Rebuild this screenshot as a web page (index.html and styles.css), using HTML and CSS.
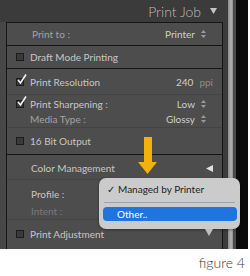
FILE: index.html
```html
<!DOCTYPE html>
<html lang="en">
<head>
  <meta charset="UTF-8">
  <title>Print Job - figure 4</title>
  <link rel="stylesheet" href="styles.css">
</head>
<body>
  <div class="shot">
    <div class="main">
      <div class="head">
        <span class="head-title">Print Job</span>
        <svg class="head-tri" width="7" height="6" viewBox="0 0 7 6"><polygon points="0,0 7,0 3.5,6" fill="#c4c4c4"/></svg>
      </div>
      <div class="body">
        <div class="strip"></div>
        <div class="panel">
          <div class="sec">
            <div class="row row-to">
              <span class="label dim">Print to :</span>
              <span class="value">Printer <svg class="updown" width="5" height="8" viewBox="0 0 5 8"><polygon points="0,3 5,3 2.5,0" fill="#9a9a9a"/><polygon points="0,5 5,5 2.5,8" fill="#9a9a9a"/></svg></span>
            </div>
          </div>
          <div class="sec">
            <div class="row row-draft">
              <span class="check"><span class="box"></span>Draft Mode Printing</span>
            </div>
          </div>
          <div class="sec">
            <div class="row row-res">
              <span class="check"><span class="box on"><svg width="10" height="11" viewBox="0 0 10 11"><path d="M1 6 L3.5 9 L9 0.5" fill="none" stroke="#f2f2f2" stroke-width="1.6"/></svg></span>Print Resolution</span>
              <span class="value">240 <span class="unit">ppi</span></span>
            </div>
            <div class="group group-sharp">
              <div class="line">
                <span class="check"><span class="box on"><svg width="10" height="11" viewBox="0 0 10 11"><path d="M1 6 L3.5 9 L9 0.5" fill="none" stroke="#f2f2f2" stroke-width="1.6"/></svg></span>Print Sharpening :</span>
                <span class="value">Low <svg class="updown" width="5" height="8" viewBox="0 0 5 8"><polygon points="0,3 5,3 2.5,0" fill="#9a9a9a"/><polygon points="0,5 5,5 2.5,8" fill="#9a9a9a"/></svg></span>
              </div>
              <div class="line">
                <span class="label dim">Media Type :</span>
                <span class="value">Glossy <svg class="updown" width="5" height="8" viewBox="0 0 5 8"><polygon points="0,3 5,3 2.5,0" fill="#9a9a9a"/><polygon points="0,5 5,5 2.5,8" fill="#9a9a9a"/></svg></span>
              </div>
            </div>
            <div class="row row-bit">
              <span class="check"><span class="box"></span>16 Bit Output</span>
            </div>
          </div>
          <div class="sec">
            <div class="row row-cm">
              <span class="label">Color Management</span>
              <svg class="left-tri" width="7" height="7" viewBox="0 0 7 7"><polygon points="7,0 7,7 0,3.5" fill="#e0e0e0"/></svg>
            </div>
            <div class="group group-profile">
              <div class="line"><span class="label">Profile :</span></div>
              <div class="line"><span class="label faint">Intent :</span></div>
            </div>
            <div class="row row-adj">
              <span class="check"><span class="box"></span>Print Adjustment</span>
            </div>
          </div>
        </div>
        <div class="gutter"></div>
      </div>
    </div>
    <div class="scroll"></div>
    <div class="rail"></div>

    <svg class="pointer" width="19" height="38" viewBox="0 0 19 38"><rect x="6" y="0" width="8" height="26" fill="#f3b20b"/><polygon points="0,25 19,25 9.5,37" fill="#f3b20b"/></svg>

    <div class="menu">
      <div class="menu-item"><span class="tick">✓</span>Managed by Printer</div>
      <div class="menu-sep"></div>
      <div class="menu-item active">Other..</div>
      <span class="menu-tail"></span>
    </div>
  </div>
  <p class="caption">figure 4</p>
</body>
</html>
```

FILE: styles.css
```css
body {
  margin: 0;
  background: #ffffff;
  font-family: Lato, "Open Sans", sans-serif;
}
.shot {
  position: relative;
  display: flex;
  width: 248px;
  height: 249px;
  background: #0b0b0b;
}
.main {
  width: 228px;
  display: flex;
  flex-direction: column;
}
.head {
  height: 22px;
  background: #3b3b3b;
  display: flex;
  justify-content: flex-end;
  align-items: center;
  padding-right: 11px;
  gap: 9px;
}
.head-title {
  font-size: 14px;
  font-weight: 300;
  color: #bdbdbd;
}
.body {
  flex: 1;
  display: flex;
}
.strip {
  width: 6px;
  background: #474747;
}
.gutter {
  width: 5px;
  background: #3b3b3b;
}
.panel {
  width: 215px;
  background: #4d4d4d;
  border-left: 1px solid #161616;
  border-right: 1px solid #161616;
  border-top: 1px solid #161616;
  font-size: 10px;
  color: #c6c6c6;
}
.sec {
  border-bottom: 1px solid #161616;
}
.sec:last-child {
  border-bottom: none;
}
.row,
.line {
  display: flex;
  justify-content: space-between;
  align-items: center;
  padding: 0 9px 0 9px;
}
.row-to {
  height: 22px;
  padding-left: 25px;
  padding-right: 16px;
}
.row-draft {
  height: 22px;
}
.row-res {
  height: 25px;
  border-bottom: 1px solid #434343;
}
.group-sharp {
  height: 31px;
  padding-top: 1px;
  border-bottom: 1px solid #434343;
}
.group-sharp .line {
  height: 15px;
  padding-right: 16px;
}
.group-sharp .line .label {
  padding-left: 14px;
}
.row-bit {
  height: 26px;
}
.row-cm {
  height: 22px;
  padding-top: 2px;
  padding-left: 24px;
  border-bottom: 1px solid #434343;
}
.group-profile {
  height: 34px;
  padding-top: 5px;
  border-bottom: 1px solid #434343;
}
.group-profile .line {
  height: 17px;
  padding-left: 24px;
}
.row-adj {
  height: 28px;
}
.check {
  display: flex;
  align-items: center;
  gap: 6px;
}
.box {
  position: relative;
  width: 6px;
  height: 6px;
  border: 1px solid #1c1c1c;
  background: #3a3a3a;
}
.box svg {
  position: absolute;
  left: 0;
  top: -5px;
}
.label.dim {
  color: #a4a4a4;
}
.label.faint {
  color: #7a7a7a;
}
.value {
  display: flex;
  align-items: center;
  gap: 6px;
  color: #cdcdcd;
}
.unit {
  color: #8c8c8c;
}
.updown {
  display: block;
}
.scroll {
  width: 5px;
  background: linear-gradient(90deg, #8a8a8a, #b4b4b4 60%, #8e8e8e);
}
.rail {
  width: 3px;
  background: #4a4a4a;
}
.pointer {
  position: absolute;
  left: 138px;
  top: 137px;
}
.menu {
  position: absolute;
  left: 99px;
  top: 178px;
  width: 141px;
  height: 51px;
  box-sizing: border-box;
  padding: 4px 3px 0 4px;
  background: #cbcbcb;
  border-radius: 7px;
  box-shadow: 0 1px 3px rgba(0, 0, 0, 0.35);
  font-size: 10px;
  color: #1e1e1e;
}
.menu-item {
  height: 14px;
  display: flex;
  align-items: center;
  padding-left: 4px;
}
.tick {
  width: 8px;
  margin-right: 3px;
  font-size: 10px;
}
.menu-sep {
  height: 1px;
  margin: 6px 2px 4px 1px;
  background: #a2a2a2;
}
.menu-item.active {
  background: #1f74df;
  color: #ffffff;
  border-radius: 4px;
  padding-left: 14px;
}
.menu-tail {
  position: absolute;
  left: 106px;
  bottom: -7px;
  border-left: 4px solid transparent;
  border-right: 4px solid transparent;
  border-top: 7px solid #bdbdbd;
}
.caption {
  margin: 5px 5px 0 0;
  text-align: right;
  font-size: 14px;
  font-weight: 300;
  color: #3a3a3a;
}
```
